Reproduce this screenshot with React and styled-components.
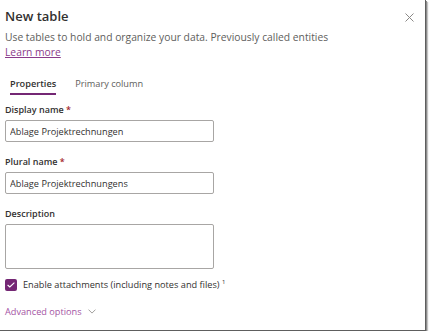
import React from "react";
import styled, { createGlobalStyle } from "styled-components";

const GlobalStyle = createGlobalStyle`
  html, body {
    margin: 0;
    padding: 0;
    background: #ffffff;
  }
  body {
    font-family: "Open Sans", "Noto Sans", sans-serif;
    color: #323130;
  }
`;

const App = () => {
  return (
    <>
      <GlobalStyle />
      <Panel>
        <Header>
          <Title>New table</Title>
          <Close aria-label='Close'>
            <svg width='9' height='9' viewBox='0 0 9 9'>
              <path d='M0.5 0.5 L8.5 8.5 M8.5 0.5 L0.5 8.5' stroke='#8a8886' strokeWidth='1' fill='none' />
            </svg>
          </Close>
        </Header>
        <Subtitle>Use tables to hold and organize your data. Previously called entities</Subtitle>
        <LearnMore href='#'>Learn more</LearnMore>

        <Tabs>
          <Tab active>Properties</Tab>
          <Tab>Primary column</Tab>
        </Tabs>

        <Field>
          <Label>
            Display name <Req>*</Req>
          </Label>
          <Input type='text' defaultValue='Ablage Projektrechnungen' />
        </Field>
        <Field>
          <Label>
            Plural name <Req>*</Req>
          </Label>
          <Input type='text' defaultValue='Ablage Projektrechnungens' />
        </Field>
        <Field>
          <Label>Description</Label>
          <TextArea />
        </Field>

        <CheckRow>
          <CheckBox>
            <svg width='8' height='6' viewBox='0 0 8 6'>
              <path d='M0.6 3 L2.8 5 L7.4 0.6' stroke='#ffffff' strokeWidth='1.1' fill='none' />
            </svg>
          </CheckBox>
          <CheckText>
            Enable attachments (including notes and files) <Sup>1</Sup>
          </CheckText>
        </CheckRow>

        <Advanced>
          Advanced options
          <svg width='8' height='5' viewBox='0 0 8 5'>
            <path d='M0.5 0.6 L4 4.1 L7.5 0.6' stroke='#a19f9d' strokeWidth='1' fill='none' />
          </svg>
        </Advanced>
      </Panel>
    </>
  );
};

export default App;

// STYLING SECTION:

const Panel = styled.div`
  box-sizing: border-box;
  width: 426px;
  height: 331px;
  background: #ffffff;
  border-right: 1px solid #5e5e5e;
  border-bottom: 1px solid #5e5e5e;
  box-shadow: 1px 1px 0 #8c8c8c, 2px 2px 1px #c4c4c4;
  padding: 5px 0 0 5px;
  display: flex;
  flex-direction: column;
`;

const Header = styled.div`
  display: flex;
  align-items: center;
  justify-content: space-between;
  padding-right: 11px;
`;

const Title = styled.h1`
  margin: 0;
  font-size: 13px;
  font-weight: 600;
  color: #323130;
  line-height: 22px;
`;

const Close = styled.button`
  border: none;
  background: transparent;
  padding: 0;
  display: flex;
  margin-top: 2px;
`;

const Subtitle = styled.p`
  margin: 3px 0 0 0;
  font-size: 10.3px;
  line-height: 14px;
  color: #605e5c;
`;

const LearnMore = styled.a`
  margin-top: 1px;
  font-size: 10.3px;
  line-height: 14px;
  color: #8a3a8a;
  text-decoration: underline;
  align-self: flex-start;
`;

const Tabs = styled.div`
  display: flex;
  gap: 19px;
  margin: 18px 0 8px 5px;
`;

const Tab = styled.div`
  font-size: 9.2px;
  line-height: 14px;
  color: ${(p) => (p.active ? "#323130" : "#605e5c")};
  font-weight: ${(p) => (p.active ? 600 : 400)};
  padding: 0 0 2px 0;
  border-bottom: 2px solid ${(p) => (p.active ? "#742774" : "transparent")};
`;

const Field = styled.div`
  display: flex;
  flex-direction: column;
`;

const Label = styled.label`
  font-size: 9px;
  font-weight: 600;
  color: #323130;
  line-height: 14px;
  margin-bottom: 3px;
`;

const Req = styled.span`
  color: #a4262c;
`;

const Input = styled.input`
  box-sizing: border-box;
  width: 209px;
  height: 22px;
  border: 1px solid #a8a6a4;
  border-radius: 2px;
  padding: 0 4px;
  font-family: "Open Sans", "Noto Sans", sans-serif;
  font-size: 9.2px;
  color: #323130;
  outline: none;
  margin-bottom: 13px;
`;

const TextArea = styled.textarea`
  box-sizing: border-box;
  width: 209px;
  height: 45px;
  border: 1px solid #a8a6a4;
  border-radius: 2px;
  resize: none;
  outline: none;
  font-family: "Open Sans", "Noto Sans", sans-serif;
  display: block;
`;

const CheckRow = styled.div`
  display: flex;
  align-items: center;
  gap: 6px;
  margin-top: 9px;
`;

const CheckBox = styled.span`
  box-sizing: border-box;
  width: 12px;
  height: 12px;
  border-radius: 2px;
  background: #742774;
  display: flex;
  align-items: center;
  justify-content: center;
`;

const CheckText = styled.span`
  font-size: 9.2px;
  color: #323130;
`;

const Sup = styled.sup`
  font-size: 6px;
  vertical-align: 4px;
`;

const Advanced = styled.div`
  display: flex;
  align-items: center;
  gap: 6px;
  margin-top: 14px;
  font-size: 9.2px;
  color: #a454a4;
`;
